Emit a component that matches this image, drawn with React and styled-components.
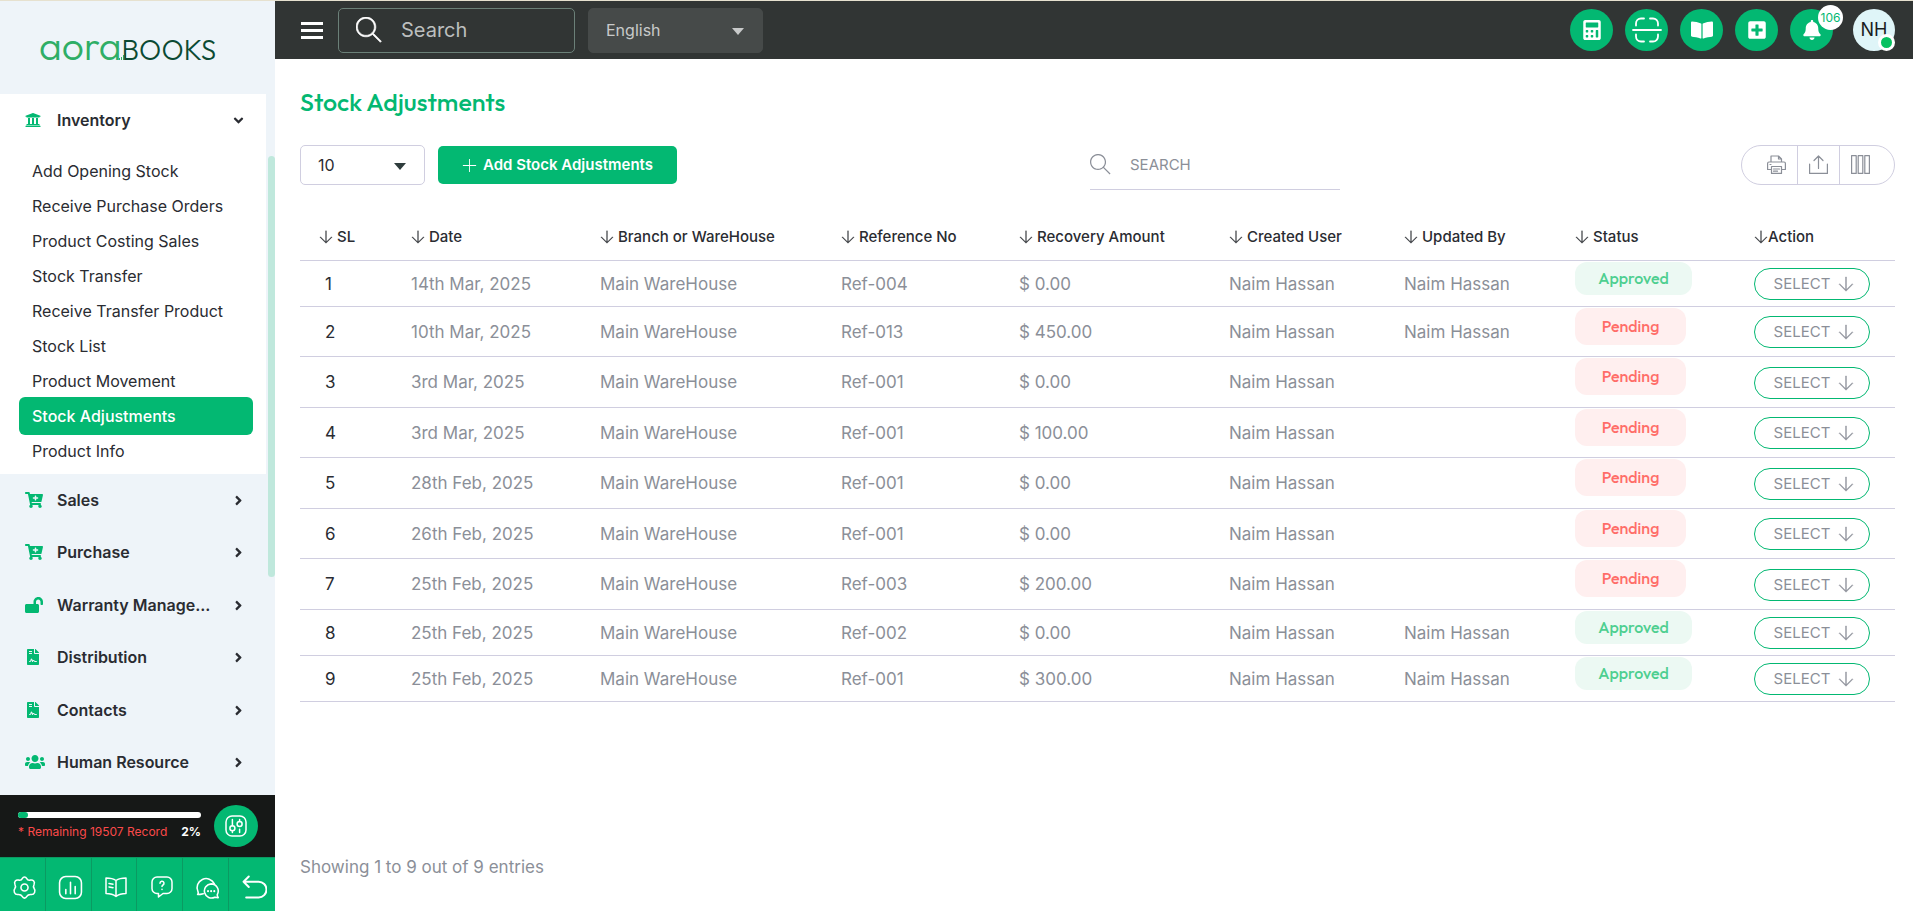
import React from "react";
import styled, { createGlobalStyle, css } from "styled-components";
import {
  FaUniversity, FaCartPlus, FaLockOpen, FaFileContract, FaUsers,
  FaAngleDown, FaAngleRight, FaCalculator, FaBookOpen, FaPlusSquare, FaBell,
} from "react-icons/fa";
import { TfiArrowDown, TfiSearch, TfiPlus } from "react-icons/tfi";

const green = "#03b872";
const line = "#d0cee0";
const grey = "#8b8f98";
const ink = "#2a2c32";

const GlobalStyle = createGlobalStyle`
  * { box-sizing: border-box; }
  body { margin: 0; background: #fff; color: ${ink}; font: 400 16px/24px Inter, "Liberation Sans", sans-serif; }
  button, input, select { font: inherit; color: inherit; margin: 0; }
  button { cursor: pointer; padding: 0; }
  a { color: inherit; text-decoration: none; }
  ul { list-style: none; margin: 0; padding: 0; }
  svg { flex: none; display: block; }
`;

const Page = styled.div`
  display: flex;
  height: 100vh;
  border-top: 1px solid #e6e1cf;
`;

/* Sidebar */
const Sidebar = styled.aside`
  width: 275px;
  flex: none;
  display: flex;
  flex-direction: column;
  background: #eef4f9;
`;
const Brand = styled.a`
  flex: none;
  height: 93px;
  padding: 0 0 0 39px;
  display: flex;
  align-items: center;
`;
const BrandName = styled.span`
  display: flex;
  align-items: baseline;
  & > svg { margin: 0 -5px 0 -3px; }
`;
const BrandFirst = styled.span`
  color: #2fae66;
  font: 300 39px/48px Outfit, Lato, sans-serif;
`;
const BrandLast = styled.span`
  color: #0b4a33;
  font: 300 28px/48px Outfit, Lato, sans-serif;
`;
const NavScroller = styled.div`
  flex: 1;
  min-height: 0;
  overflow: hidden;
  display: grid;
  grid-template-columns: 1fr 7px;
  column-gap: 2px;
`;
const ScrollThumb = styled.div`
  margin-top: 62px;
  height: 421px;
  border-radius: 4px;
  background: #bfe8dc;
`;
const Group = styled.li`
  &:nth-child(odd) { padding-bottom: 1px; }
`;
const OpenGroup = styled.li`
  background: #fff;
  padding-bottom: 7px;
`;
const GroupButton = styled.button`
  width: 100%;
  height: 52px;
  padding: 0 20px 0 25px;
  border: 0;
  background: none;
  display: grid;
  grid-template-columns: 32px 1fr auto;
  align-items: center;
  text-align: left;
  font-weight: 600;
  & > svg:first-child { color: ${green}; }
`;
const GroupLabel = styled.span`
  white-space: nowrap;
`;
const SubList = styled.ul`
  padding: 6px 13px 0 19px;
`;
const SubLink = styled.a`
  display: flex;
  align-items: center;
  height: 38px;
  margin-bottom: -3px;
  padding-left: 13px;
  border-radius: 6px;
  ${(p) => p.$active && css`
    background: ${green};
    color: #fff;
    font-weight: 500;
  `}
`;
const Quota = styled.div`
  flex: none;
  height: 62px;
  background: #161817;
  padding: 0 17px 0 18px;
  display: flex;
  align-items: center;
  justify-content: space-between;
`;
const QuotaInfo = styled.div`
  width: 183px;
`;
const QuotaBar = styled.div`
  height: 6px;
  border-radius: 3px;
  background: #fff;
  & > div { height: 100%; width: 10px; border-radius: 3px; background: ${green}; }
`;
const QuotaText = styled.div`
  display: flex;
  justify-content: space-between;
  padding-top: 5px;
  font-size: 12px;
  line-height: 18px;
  color: #fb4a4a;
  white-space: nowrap;
  strong { color: #fff; font-weight: 700; }
`;
const RoundButton = styled.button`
  position: relative;
  width: ${(p) => p.$size || 42}px;
  height: 42px;
  border: 0;
  border-radius: 50%;
  background: ${(p) => p.$bg || green};
  color: ${(p) => p.$fg || "#fff"};
  display: flex;
  align-items: center;
  justify-content: center;
  font-size: 18px;
`;
const QuickBar = styled.div`
  flex: none;
  height: 54px;
  display: grid;
  grid-template-columns: repeat(6, 1fr);
  background: ${green};
  border-top: 1px solid #0b9a62;
`;
const QuickButton = styled.button`
  border: 0;
  border-right: 1px solid #0b9a62;
  background: none;
  color: #fff;
  display: flex;
  align-items: center;
  justify-content: center;
  padding: 5px 0 0 4px;
  &:last-child { border-right: 0; }
`;

/* Top bar */
const Body = styled.div`
  flex: 1;
  min-width: 0;
  display: flex;
  flex-direction: column;
`;
const TopBar = styled.header`
  flex: none;
  height: 58px;
  background: #313534;
  display: flex;
  align-items: center;
  padding: 0 18px 0 26px;
`;
const MenuButton = styled.button`
  width: 22px;
  height: 17px;
  margin-right: 15px;
  border: 0;
  background: none;
  color: #fff;
`;
const TopSearch = styled.label`
  width: 237px;
  height: 45px;
  margin-right: 13px;
  border: 1px solid #6b8078;
  border-radius: 5px;
  display: flex;
  align-items: center;
  padding-left: 17px;
  color: #fff;
  input {
    width: 100%;
    margin-left: 19px;
    padding: 0;
    border: 0;
    outline: 0;
    background: none;
    font-size: 20px;
    color: #c4c6c5;
  }
  input::placeholder { color: #bcbfbe; opacity: 1; }
`;
const SelectBox = styled.div`
  display: grid;
  align-items: center;
  width: ${(p) => p.$width}px;
  height: ${(p) => p.$height}px;
  & > * { grid-area: 1 / 1; }
  & > svg { justify-self: end; margin: 2px 19px 0 0; pointer-events: none; color: ${(p) => p.$arrow}; }
  select {
    appearance: none;
    width: 100%;
    height: 100%;
    padding: 0 17px;
    outline: 0;
    border-radius: 5px;
    border: 1px solid ${(p) => (p.$dark ? "#464a49" : line)};
    background: ${(p) => (p.$dark ? "#464a49" : "#fff")};
    color: ${(p) => (p.$dark ? "#c8caca" : ink)};
  }
`;
const TopActions = styled.div`
  margin-left: auto;
  display: flex;
  gap: 12px;
`;
const Count = styled.span`
  position: absolute;
  top: -4px;
  right: -10px;
  width: 25px;
  height: 25px;
  border-radius: 50%;
  background: #fff;
  color: ${green};
  font-size: 12px;
  line-height: 25px;
  text-align: center;
`;
const Avatar = styled(RoundButton)`
  margin-left: 8px;
`;
const Online = styled.span`
  position: absolute;
  right: 0;
  bottom: 0;
  width: 17px;
  height: 17px;
  border: 3px solid #fff;
  border-radius: 50%;
  background: #07c160;
`;

/* Content */
const Main = styled.main`
  flex: 1;
  min-height: 0;
  display: flex;
  flex-direction: column;
  padding: 27px 18px 32px 25px;
`;
const Title = styled.h1`
  margin: 0 0 27px;
  font: 500 25px/32px Outfit, Lato, sans-serif;
  color: ${green};
`;
const Tools = styled.div`
  display: grid;
  grid-template-columns: 790fr 805fr;
  align-items: start;
`;
const ToolSide = styled.div`
  display: flex;
  justify-content: ${(p) => (p.$spread ? "space-between" : "flex-start")};
  align-items: ${(p) => (p.$spread ? "flex-start" : "center")};
  gap: 13px;
`;
const AddButton = styled.button`
  width: 239px;
  height: 38px;
  border: 0;
  border-radius: 5px;
  background: ${green};
  color: #fff;
  font-size: 15px;
  font-weight: 600;
  display: flex;
  align-items: center;
  justify-content: center;
  gap: 6px;
`;
const ListSearch = styled.label`
  width: 250px;
  height: 45px;
  padding-bottom: 5px;
  border-bottom: 1px solid ${line};
  display: flex;
  align-items: center;
  color: ${grey};
  input {
    width: 100%;
    margin-left: 19px;
    padding: 0;
    border: 0;
    outline: 0;
    background: none;
    font-size: 15px;
  }
  input::placeholder { color: ${grey}; opacity: 1; }
`;
const ExportGroup = styled.div`
  display: flex;
  height: 40px;
  padding: 0 13px;
  border: 1px solid ${line};
  border-radius: 20px;
`;
const ExportButton = styled.button`
  width: 42px;
  border: 0;
  border-left: 1px solid ${line};
  background: none;
  color: ${grey};
  display: flex;
  align-items: center;
  justify-content: center;
  padding-bottom: 1px;
  &:first-child { border-left: 0; }
`;
const Table = styled.table`
  width: 100%;
  margin-top: 24px;
  table-layout: fixed;
  border-collapse: separate;
  border-spacing: 0;
  white-space: nowrap;
`;
const Th = styled.th`
  height: 47px;
  padding: 0;
  border-bottom: 1px solid ${line};
  text-align: left;
  font-size: 15px;
  font-weight: 500;
  &:first-child { padding-left: 19px; }
`;
const Sort = styled.span`
  display: flex;
  align-items: center;
  gap: ${(p) => (p.$tight ? 0 : 4)}px;
`;
const Row = styled.tr`
  height: ${(p) => (p.$approved ? 46 : 50)}px;
  &:nth-child(odd) { height: ${(p) => (p.$approved ? 46 : 51)}px; }
`;
const Td = styled.td`
  padding: 0;
  border-bottom: 1px solid ${line};
  font-size: 17px;
  color: ${grey};
  &:first-child { padding-left: 25px; color: ${ink}; }
`;
const StatusTd = styled(Td)`
  vertical-align: top;
  padding-top: 1px;
`;
const Pill = styled.span`
  display: flex;
  align-items: center;
  justify-content: center;
  width: ${(p) => (p.$approved ? 117 : 111)}px;
  height: ${(p) => (p.$approved ? 33 : 37)}px;
  padding-bottom: 1px;
  border-radius: 12px;
  background: ${(p) => (p.$approved ? "#ecf9f3" : "#ffefef")};
  color: ${(p) => (p.$approved ? "#4ecf90" : "#ff6d68")};
  font: 500 16px/20px Outfit, Lato, sans-serif;
`;
const SelectButton = styled.button`
  width: 116px;
  height: 32px;
  padding-left: 4px;
  border: 1px solid ${green};
  border-radius: 16px;
  background: #fff;
  color: ${grey};
  font-size: 15px;
  display: flex;
  align-items: center;
  justify-content: center;
  gap: 8px;
  margin-top: 1px;
`;
const Summary = styled.p`
  margin: auto 0 0;
  font-size: 17px;
  color: ${grey};
`;

const strokeProps = { fill: "none", stroke: "currentColor", strokeLinecap: "round", strokeLinejoin: "round" };
const Icon = ({ size = 24, w = 24, h = 24, sw = 1.5, children }) => (
  <svg width={size} height={(size * h) / w} viewBox={`0 0 ${w} ${h}`} strokeWidth={sw} aria-hidden="true" {...strokeProps}>
    {children}
  </svg>
);

const Bars = () => (
  <svg width="8" height="7" viewBox="0 0 8 7" fill="#2fae66" aria-hidden="true">
    <path d="M0 5h1v2H0zM2 4h1v3H2zM4 2h1v5H4zM6 0h1v7H6z" />
  </svg>
);
const MenuIcon = () => (
  <svg width="22" height="17" viewBox="0 0 22 17" fill="currentColor" aria-hidden="true">
    <path d="M0 0h22v3H0zM0 7h22v3H0zM0 14h22v3H0z" />
  </svg>
);
const ScanIcon = () => (
  <Icon size={30} w={30} h={26} sw={1.8}>
    <path d="M4 8.500V6.500a5 5 0 0 1 5-5h3M18 1.500h3a5 5 0 0 1 5 5v2M26 17.500v2a5 5 0 0 1-5 5h-3M12 24.500H9a5 5 0 0 1-5-5v-2M1 13h28" />
  </Icon>
);
const SlidersIcon = () => (
  <Icon>
    <rect x="2" y="2" width="20" height="20" rx="6" />
    <path d="M15.600 18.500v-3.300M15.600 7.500v-2M8.400 18.500v-1.500M8.400 11.800V5.500" />
    <circle cx="15.600" cy="9.900" r="2.500" />
    <circle cx="8.400" cy="14.300" r="2.500" />
  </Icon>
);
const GearIcon = () => (
  <Icon size={25}>
    <circle cx="12" cy="12" r="3.400" />
    <path d="M10 3.200c.9-1.700 3.100-1.700 4 0 .8 1.600 2.100 2.200 3.800 1.700 2.400-.6 4.500 1.800 3.400 4-1 1.800-1 2.500.1 4.100 1.600 2.100.400 6-2.900 5.700-2-.2-3.300.3-4.200 1.900-1.100 2.100-3.300 2.100-4.400 0-.9-1.600-2.200-2.100-4.200-1.900-3.300.3-4.500-3.600-2.900-5.700 1.100-1.600 1.100-2.300.1-4.100-1.100-2.200 1-4.600 3.400-4 1.700.5 3-.1 3.800-1.700z" />
  </Icon>
);
const ChartIcon = () => (
  <Icon size={25}>
    <rect x="1.500" y="1.500" width="21" height="21" rx="6" />
    <path d="M7.500 18v-4M12 18V7M16.500 18v-7" />
  </Icon>
);
const BookIcon = () => (
  <Icon size={24}>
    <path d="M12 5.500v16M12 5.500C9.500 3.700 6 3 2 3v15.500c4 0 7.500 1 10 3 2.500-2 6-3 10-3V3c-4 0-7.500.7-10 2.500zM5 8.500l4 .7M5 12l4 .7" />
  </Icon>
);
const HelpIcon = () => (
  <Icon size={24}>
    <path d="M7 2h10a5 5 0 0 1 5 5v6.500a5 5 0 0 1-5 5h-4L8.500 22v-3.500H7a5 5 0 0 1-5-5V7a5 5 0 0 1 5-5z" />
    <path d="M10 8.300a2 2 0 1 1 3 1.700c-.7.400-1 .8-1 1.600M12 14.300v.1" />
  </Icon>
);
const ChatIcon = () => (
  <Icon size={25}>
    <path d="M8 18c-1.500.4-3 .8-5.500.8.800-1 .8-2 .3-3A8.500 8.500 0 1 1 18.600 8.500" />
    <path d="M15.500 8.500a6.800 6.800 0 0 1 6 10c-.3.800 0 2 .8 3.300-1.500.1-2.300-.2-3.300-.5a6.800 6.800 0 1 1-3.500-12.800z" />
    <path d="M12.500 15.500v.1M15.500 15.500v.1M18.500 15.500v.1" strokeWidth="2" />
  </Icon>
);
const BackIcon = () => (
  <Icon size={25}>
    <path d="M6.500 1.500 1.500 6.500l5 5M1.500 6.500h14.500a7 7 0 0 1 0 15H4" strokeWidth="1.900" />
  </Icon>
);
const PrintIcon = () => (
  <Icon size={19} w={19} h={19} sw={1.2}>
    <path d="M4 7V1h7.500l3 3v3M11.500 1v3h3M4 14.500H.6V8.600C.6 7.700 1.200 7 2 7h15c.8 0 1.400.7 1.400 1.600v5.900H15M4.500 11.500h10v6.900h-10zM6.500 14h6M6.500 16.200h4M3 9.500h1" />
  </Icon>
);
const UploadIcon = () => (
  <Icon size={19} w={19} h={19} sw={1.2}>
    <path d="M.6 9v9.400h17.800V9M9.500 13.500V1M5 5.500 9.500 1 14 5.500" />
  </Icon>
);
const ColumnsIcon = () => (
  <Icon size={19} w={19} h={19} sw={1.2}>
    <path d="M.6.600h4.600v17.800H.6zM7.200.600h4.600v17.800H7.200zM13.800.600h4.600v17.800h-4.600z" />
  </Icon>
);

const subItems = [
  "Add Opening Stock", "Receive Purchase Orders", "Product Costing Sales", "Stock Transfer",
  "Receive Transfer Product", "Stock List", "Product Movement", "Stock Adjustments", "Product Info",
];
const groups = [
  ["Sales", FaCartPlus, 18], ["Purchase", FaCartPlus, 18], ["Warranty Manage...", FaLockOpen, 18],
  ["Distribution", FaFileContract, 16], ["Contacts", FaFileContract, 16], ["Human Resource", FaUsers, 20],
];
const quick = [
  ["Settings", GearIcon], ["Reports", ChartIcon], ["Guide", BookIcon],
  ["Help", HelpIcon], ["Chat", ChatIcon], ["Back", BackIcon],
];
const columns = [
  ["SL", 111], ["Date", 189], ["Branch or WareHouse", 241], ["Reference No", 178],
  ["Recovery Amount", 210], ["Created User", 175], ["Updated By", 171], ["Status", 179], ["Action", 141],
];
const rows = [
  ["14th Mar, 2025", "Ref-004", "$ 0.00", "Naim Hassan", true],
  ["10th Mar, 2025", "Ref-013", "$ 450.00", "Naim Hassan", false],
  ["3rd Mar, 2025", "Ref-001", "$ 0.00", "", false],
  ["3rd Mar, 2025", "Ref-001", "$ 100.00", "", false],
  ["28th Feb, 2025", "Ref-001", "$ 0.00", "", false],
  ["26th Feb, 2025", "Ref-001", "$ 0.00", "", false],
  ["25th Feb, 2025", "Ref-003", "$ 200.00", "", false],
  ["25th Feb, 2025", "Ref-002", "$ 0.00", "Naim Hassan", true],
  ["25th Feb, 2025", "Ref-001", "$ 300.00", "Naim Hassan", true],
];

const Caret = () => (
  <svg width="12" height="7" viewBox="0 0 12 7" fill="currentColor" aria-hidden="true">
    <path d="M0 0h12L6 7z" />
  </svg>
);

export default function App() {
  return (
    <>
      <GlobalStyle />
      <Page>
        <Sidebar>
          <Brand href="#">
            <BrandName>
              <BrandFirst>aora</BrandFirst>
              <Bars />
              <BrandLast>BOOKS</BrandLast>
            </BrandName>
          </Brand>
          <NavScroller>
            <nav>
              <ul>
                <OpenGroup>
                  <GroupButton>
                    <FaUniversity size={16} />
                    <GroupLabel>Inventory</GroupLabel>
                    <FaAngleDown size={15} />
                  </GroupButton>
                  <SubList>
                    {subItems.map((item) => (
                      <li key={item}>
                        <SubLink href="#" $active={item === "Stock Adjustments"}>{item}</SubLink>
                      </li>
                    ))}
                  </SubList>
                </OpenGroup>
                {groups.map(([label, GroupIcon, size]) => (
                  <Group key={label}>
                    <GroupButton>
                      <GroupIcon size={size} />
                      <GroupLabel>{label}</GroupLabel>
                      <FaAngleRight size={15} />
                    </GroupButton>
                  </Group>
                ))}
              </ul>
            </nav>
            <ScrollThumb />
          </NavScroller>
          <Quota>
            <QuotaInfo>
              <QuotaBar><div /></QuotaBar>
              <QuotaText><span>* Remaining 19507 Record</span><strong>2%</strong></QuotaText>
            </QuotaInfo>
            <RoundButton $size={44} aria-label="Preferences"><SlidersIcon /></RoundButton>
          </Quota>
          <QuickBar>
            {quick.map(([label, QuickIcon]) => (
              <QuickButton key={label} aria-label={label}><QuickIcon /></QuickButton>
            ))}
          </QuickBar>
        </Sidebar>

        <Body>
          <TopBar>
            <MenuButton aria-label="Toggle menu"><MenuIcon /></MenuButton>
            <TopSearch>
              <TfiSearch size={26} strokeWidth={0.4} stroke="currentColor" />
              <input type="text" placeholder="Search" aria-label="Search" />
            </TopSearch>
            <SelectBox $dark $width={175} $height={45} $arrow="#c8caca">
              <select aria-label="Language"><option>English</option></select>
              <Caret />
            </SelectBox>
            <TopActions>
              <RoundButton $size={43} aria-label="Calculator"><FaCalculator size={20} /></RoundButton>
              <RoundButton $size={43} aria-label="Scan"><ScanIcon /></RoundButton>
              <RoundButton $size={43} aria-label="Ledger"><FaBookOpen size={22} /></RoundButton>
              <RoundButton $size={43} aria-label="Add new"><FaPlusSquare size={20} /></RoundButton>
              <RoundButton $size={43} aria-label="Notifications"><FaBell size={20} /><Count>106</Count></RoundButton>
              <Avatar $bg="#dff5f8" $fg="#1b1d1f">NH<Online /></Avatar>
            </TopActions>
          </TopBar>

          <Main>
            <Title>Stock Adjustments</Title>
            <Tools>
              <ToolSide>
                <SelectBox $width={125} $height={40} $arrow="#2f3c3c">
                  <select aria-label="Rows per page"><option>10</option></select>
                  <Caret />
                </SelectBox>
                <AddButton><TfiPlus size={15} />Add Stock Adjustments</AddButton>
              </ToolSide>
              <ToolSide $spread>
                <ListSearch>
                  <TfiSearch size={21} />
                  <input type="text" placeholder="SEARCH" aria-label="Search entries" />
                </ListSearch>
                <ExportGroup>
                  <ExportButton aria-label="Print"><PrintIcon /></ExportButton>
                  <ExportButton aria-label="Export"><UploadIcon /></ExportButton>
                  <ExportButton aria-label="Columns"><ColumnsIcon /></ExportButton>
                </ExportGroup>
              </ToolSide>
            </Tools>

            <Table>
              <colgroup>{columns.map(([name, width]) => <col key={name} width={width} />)}</colgroup>
              <thead>
                <tr>
                  {columns.map(([name]) => (
                    <Th key={name} scope="col">
                      <Sort $tight={name === "Action"}>
                        <TfiArrowDown size={14} strokeWidth={0.3} stroke="currentColor" />
                        {name}
                      </Sort>
                    </Th>
                  ))}
                </tr>
              </thead>
              <tbody>
                {rows.map(([date, ref, amount, updatedBy, approved], i) => (
                  <Row key={i} $approved={approved}>
                    <Td>{i + 1}</Td>
                    <Td>{date}</Td>
                    <Td>Main WareHouse</Td>
                    <Td>{ref}</Td>
                    <Td>{amount}</Td>
                    <Td>Naim Hassan</Td>
                    <Td>{updatedBy}</Td>
                    <StatusTd><Pill $approved={approved}>{approved ? "Approved" : "Pending"}</Pill></StatusTd>
                    <Td>
                      <SelectButton>
                        SELECT
                        <TfiArrowDown size={16} strokeWidth={0.4} stroke="currentColor" />
                      </SelectButton>
                    </Td>
                  </Row>
                ))}
              </tbody>
            </Table>
            <Summary>Showing 1 to 9 out of 9 entries</Summary>
          </Main>
        </Body>
      </Page>
    </>
  );
}
